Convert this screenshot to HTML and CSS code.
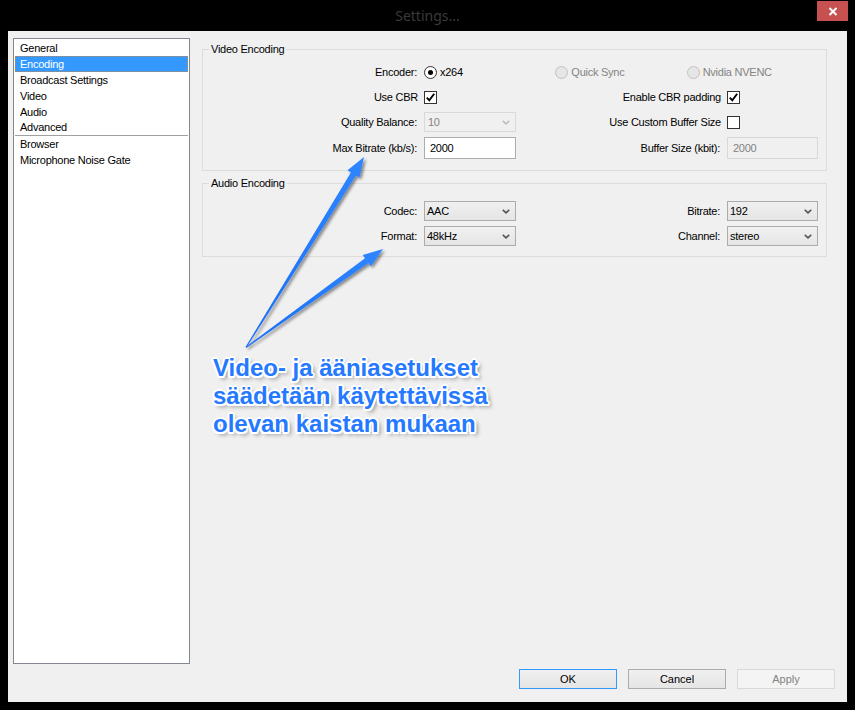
FILE: index.html
```html
<!DOCTYPE html>
<html lang="fi">
<head>
<meta charset="utf-8">
<title>Settings...</title>
<link rel="stylesheet" href="styles.css">
</head>
<body>
<div class="titlebar">
  <span class="title">Settings...</span>
  <button class="close" aria-label="Close">
    <svg width="10" height="9" viewBox="0 0 10 9"><path d="M1.5 1 L8.5 8 M8.5 1 L1.5 8" stroke="#fff" stroke-width="2" fill="none"/></svg>
  </button>
</div>

<div class="window">
  <ul class="nav">
    <li>General</li>
    <li class="active">Encoding</li>
    <li>Broadcast Settings</li>
    <li>Video</li>
    <li>Audio</li>
    <li class="sep">Advanced</li>
    <li>Browser</li>
    <li>Microphone Noise Gate</li>
  </ul>

  <div class="main">
    <fieldset class="group video">
      <legend>Video Encoding</legend>
      <div class="grid video-grid">
        <span class="lbl">Encoder:</span>
        <div class="radios">
          <span class="radio-item"><span class="radio checked"></span>x264</span>
          <span class="radio-item disabled"><span class="radio"></span>Quick Sync</span>
          <span class="radio-item disabled"><span class="radio"></span>Nvidia NVENC</span>
        </div>

        <span class="lbl ck">Use CBR</span>
        <span class="cell"><span class="check"><svg width="11" height="11" viewBox="0 0 11 11"><path d="M1.8 5.6 L4.3 8.3 L9.2 1.8" stroke="#000" stroke-width="1.9" fill="none"/></svg></span></span>
        <span class="lbl ck">Enable CBR padding</span>
        <span class="cell"><span class="check"><svg width="11" height="11" viewBox="0 0 11 11"><path d="M1.8 5.6 L4.3 8.3 L9.2 1.8" stroke="#000" stroke-width="1.9" fill="none"/></svg></span></span>

        <span class="lbl">Quality Balance:</span>
        <div class="combo disabled"><span>10</span><svg class="chev" width="8" height="5" viewBox="0 0 8 5"><path d="M0.8 0.8 L4 3.8 L7.2 0.8" stroke="#bdbdbd" stroke-width="1.6" fill="none"/></svg></div>
        <span class="lbl ck">Use Custom Buffer Size</span>
        <span class="cell"><span class="check"></span></span>

        <span class="lbl">Max Bitrate (kb/s):</span>
        <div class="textbox">2000</div>
        <span class="lbl">Buffer Size (kbit):</span>
        <div class="textbox disabled">2000</div>
      </div>
    </fieldset>

    <fieldset class="group audio">
      <legend>Audio Encoding</legend>
      <div class="grid">
        <span class="lbl">Codec:</span>
        <div class="combo"><span>AAC</span><svg class="chev" width="8" height="5" viewBox="0 0 8 5"><path d="M0.8 0.8 L4 3.8 L7.2 0.8" stroke="#555" stroke-width="1.6" fill="none"/></svg></div>
        <span class="lbl">Bitrate:</span>
        <div class="combo"><span>192</span><svg class="chev" width="8" height="5" viewBox="0 0 8 5"><path d="M0.8 0.8 L4 3.8 L7.2 0.8" stroke="#555" stroke-width="1.6" fill="none"/></svg></div>

        <span class="lbl">Format:</span>
        <div class="combo"><span>48kHz</span><svg class="chev" width="8" height="5" viewBox="0 0 8 5"><path d="M0.8 0.8 L4 3.8 L7.2 0.8" stroke="#555" stroke-width="1.6" fill="none"/></svg></div>
        <span class="lbl">Channel:</span>
        <div class="combo"><span>stereo</span><svg class="chev" width="8" height="5" viewBox="0 0 8 5"><path d="M0.8 0.8 L4 3.8 L7.2 0.8" stroke="#555" stroke-width="1.6" fill="none"/></svg></div>
      </div>
    </fieldset>

    <div class="buttons">
      <button class="btn default">OK</button>
      <button class="btn">Cancel</button>
      <button class="btn" disabled>Apply</button>
    </div>
  </div>
</div>

<div class="annot">
  <svg class="arrows" width="855" height="710" viewBox="0 0 855 710">
    <defs>
      <linearGradient id="ag" x1="0" y1="1" x2="1" y2="0">
        <stop offset="0" stop-color="#1a6ef5"/>
        <stop offset="1" stop-color="#2f86ff"/>
      </linearGradient>
      <filter id="sh" x="-20%" y="-20%" width="140%" height="140%">
        <feGaussianBlur in="SourceAlpha" stdDeviation="1.5"/>
        <feOffset dx="2" dy="2" result="b"/>
        <feComponentTransfer><feFuncA type="linear" slope="0.45"/></feComponentTransfer>
        <feMerge><feMergeNode/><feMergeNode in="SourceGraphic"/></feMerge>
      </filter>
    </defs>
    <g filter="url(#sh)" fill="url(#ag)">
      <polygon points="245.5,347 350.9,172.4 347.5,170.3 364,157 359.4,177.7 356,175.6 246.5,347.5"/>
      <polygon points="245.5,347 365,258.2 362.7,255 383,249 370.8,266.3 368.5,263.1 246.5,347.8"/>
    </g>
  </svg>
  <div class="note">Video- ja ääniasetukset<br>säädetään käytettävissä<br>olevan kaistan mukaan</div>
</div>
</body>
</html>
```

FILE: styles.css
```css
* { box-sizing: border-box; }

html, body { margin: 0; padding: 0; }

body {
  background: #000;
  width: 855px;
  height: 710px;
  position: relative;
  overflow: hidden;
  font-family: "Liberation Sans", Arial, sans-serif;
  font-size: 11px;
  letter-spacing: -0.25px;
  color: #000;
}

/* title bar */
.titlebar {
  height: 31px;
  display: grid;
  grid-template-columns: 1fr auto 1fr;
  align-items: start;
}
.title {
  grid-column: 2;
  font-family: "Noto Sans", sans-serif;
  font-size: 14px;
  letter-spacing: 0;
  color: #3a3a3a;
  line-height: 31px;
}
.close {
  grid-column: 3;
  justify-self: end;
  margin: 1px 7px 0 0;
  width: 31px;
  height: 20px;
  background: #c75050;
  border: 0;
  padding: 0;
  display: flex;
  align-items: center;
  justify-content: center;
}

/* window client */
.window {
  margin-left: 8px;
  width: 839px;
  height: 671px;
  background: #f0f0f0;
  display: flex;
}

.nav {
  list-style: none;
  margin: 7px 0 0 5px;
  padding: 1px;
  width: 177px;
  height: 626px;
  background: #fff;
  border: 1px solid #828790;
  flex: none;
}
.nav li {
  height: 16px;
  line-height: 16px;
  padding-left: 5px;
  white-space: nowrap;
}
.nav li.active {
  background: #3399ff;
  color: #fff;
  outline: 1px dotted #c8864a;
  outline-offset: -1px;
}
.nav li.sep {
  border-bottom: 1px solid #a0a0a0;
  line-height: 15px;
}

.main {
  margin-left: 12px;
  padding-top: 12px;
  flex: 1;
  display: flex;
  flex-direction: column;
}

/* group boxes */
.group {
  margin: 0;
  width: 625px;
  min-width: 0;
  border: 1px solid #dcdcdc;
  padding: 6px 8px 11px 0;
}
.group legend {
  padding: 0 2px;
  margin-left: 6px;
  line-height: 13px;
}
.audio {
  margin-top: 6px;
  padding-top: 11px;
  padding-bottom: 10px;
}

.grid {
  display: grid;
  grid-template-columns: 221px 92px 211px 91px;
  grid-auto-rows: 20px;
  row-gap: 5px;
  align-items: center;
}
.video-grid {
  grid-template-rows: 20px 20px 20px 22px;
}

.lbl {
  text-align: right;
  padding-right: 7px;
  white-space: nowrap;
}
.lbl.ck { padding-right: 6px; }

.cell { display: flex; align-items: center; }

/* radios */
.radios {
  grid-column: 2 / -1;
  display: flex;
  align-items: center;
}
.radio-item {
  width: 132px;
  display: flex;
  align-items: center;
  gap: 3px;
  white-space: nowrap;
}
.radio-item.disabled { color: #838383; }
.radio {
  width: 13px;
  height: 13px;
  border-radius: 50%;
  border: 1px solid #333;
  background: #fff;
  display: flex;
  align-items: center;
  justify-content: center;
}
.radio.checked::after {
  content: "";
  width: 5px;
  height: 5px;
  border-radius: 50%;
  background: #000;
}
.radio-item.disabled .radio {
  border-color: #c2c2c2;
  background: #e6e6e6;
}

/* checkbox */
.check {
  width: 13px;
  height: 13px;
  border: 1px solid #333;
  background: #fff;
  display: flex;
  align-items: center;
  justify-content: center;
}

/* combo */
.combo {
  height: 20px;
  border: 1px solid #acacac;
  background: linear-gradient(#f0f0f0, #e5e5e5);
  display: flex;
  align-items: center;
  justify-content: space-between;
  padding: 0 5px 0 2px;
}
.combo.disabled {
  border-color: #d9d9d9;
  background: #f0f0f0;
  color: #838383;
  padding-left: 3px;
}

/* text box */
.textbox {
  height: 22px;
  border: 1px solid #abadb3;
  background: #fff;
  padding-left: 5px;
  line-height: 20px;
}
.textbox.disabled {
  background: #f0f0f0;
  border-color: #d9d9d9;
  color: #838383;
}

/* buttons */
.buttons {
  margin-top: auto;
  display: flex;
  justify-content: flex-end;
  gap: 11px;
  padding: 0 12px 13px 0;
}
.btn {
  width: 98px;
  height: 20px;
  border: 1px solid #acacac;
  background: linear-gradient(#f0f0f0, #e5e5e5);
  font: inherit;
  color: #000;
  padding: 0;
}
.btn.default { border-color: #3399ff; }
.btn:disabled {
  border-color: #d9d9d9;
  background: #f4f4f4;
  color: #838383;
}

/* annotation overlay */
.annot {
  position: absolute;
  left: 0;
  top: 0;
  width: 855px;
  height: 710px;
  pointer-events: none;
}
.arrows {
  position: absolute;
  left: 0;
  top: 0;
}
.note {
  position: absolute;
  left: 213px;
  top: 354px;
  font-family: "Liberation Sans", Arial, sans-serif;
  font-weight: bold;
  font-size: 24px;
  letter-spacing: 0;
  line-height: 28px;
  color: #2479ff;
  white-space: nowrap;
  text-shadow:
    -2px 0 #fff, 2px 0 #fff, 0 -2px #fff, 0 2px #fff,
    -1.5px -1.5px #fff, 1.5px -1.5px #fff, -1.5px 1.5px #fff, 1.5px 1.5px #fff,
    3px 3px 4px rgba(0, 0, 0, 0.45);
}
```
